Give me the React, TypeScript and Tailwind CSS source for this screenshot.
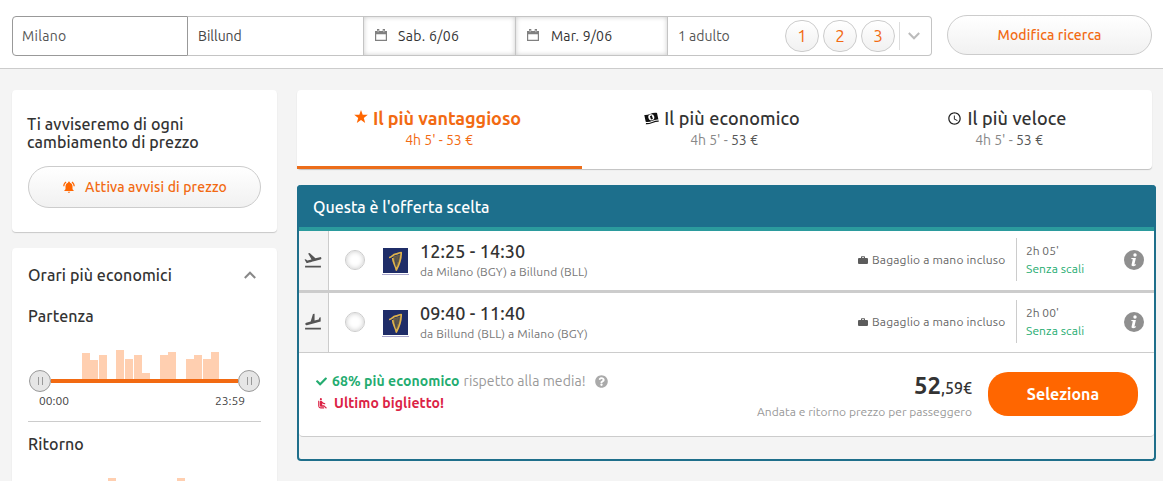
import React from 'react';
import { FaCheck, FaQuestionCircle } from 'react-icons/fa';
import { MdAccessTime, MdAirlineSeatReclineNormal, MdFlightLand, MdFlightTakeoff, MdNotificationsActive } from 'react-icons/md';

interface Flight {
  times: string;
  route: string;
  duration: string;
  outbound: boolean;
}

const flights: Flight[] = [
  { times: '12:25 - 14:30', route: 'da Milano (BGY) a Billund (BLL)', duration: "2h 05'", outbound: true },
  { times: '09:40 - 11:40', route: 'da Billund (BLL) a Milano (BGY)', duration: "2h 00'", outbound: false },
];

// One entry per time slot, value is the bar height in px
const departureBars = [0, 0, 0, 0, 26, 19, 24, 0, 29, 20, 24, 6, 0, 24, 27, 0, 20, 24, 20, 27, 0, 0, 0];
const returnBars = [0, 0, 0, 0, 0, 0, 0, 29, 0, 0, 0, 0, 0, 0, 0, 29, 0, 0, 0, 0, 0, 0, 0];

function CalendarIcon() {
  return (
    <svg className="mb-0.5 h-3 w-3" viewBox="0 0 12 12" fill="none">
      <path d="M.6 2.5h10.800v8.900H.6z" stroke="#808080" strokeWidth="1.200" />
      <path d="M0 2h12v3.300H0zM2 0h2.300v3H2zM7.700 0H10v3H7.700z" fill="#808080" />
      <path d="M3.100 1v2.200M8.900 1v2.200" stroke="#fff" strokeWidth=".6" />
    </svg>
  );
}

function StarIcon() {
  return (
    <svg className="mb-[3px] h-[13px] w-[14px]" viewBox="0 0 14 13">
      <path d="M7 0l1.700 4.700 5.100.1-4 3.100L11.200 13 7 10 2.800 13l1.400-5.100-4-3.100 5.100-.1z" fill="#ff6600" />
    </svg>
  );
}

function BanknotesIcon() {
  return (
    <svg className="h-[13px] w-[15px]" viewBox="0 0 15 13">
      <path d="M.3 3C4 3.800 8 0 13 .9l1.400 6.700C10.500 6.800 6 11 1.700 9.800z" fill="#111" />
      <ellipse cx="7.300" cy="5.300" rx="3" ry="3.100" fill="#fff" transform="rotate(-14 7.300 5.300)" />
      <path d="M5.900 4.200l1.900-.9 1.100 3.700-1.900.5z" fill="#111" />
      <path d="M1.900 11.600c4.300.9 8-3 12.800-2.500" stroke="#111" strokeWidth="1.200" fill="none" />
    </svg>
  );
}

function SuitcaseIcon() {
  return (
    <svg className="h-2 w-[10px] shrink-0" viewBox="0 0 10 8">
      <path d="M3 2V.9C3 .5 3.300.2 3.700.2h2.600c.4 0 .7.3.7.7V2h2.100c.5 0 .9.4.9.9v4.200c0 .5-.4.9-.9.9H.9C.4 8 0 7.600 0 7.100V2.900C0 2.400.4 2 .9 2zm1 0h2v-.8H4z" fill="#5c5c5c" />
    </svg>
  );
}

function HarpLogo() {
  return (
    <svg className="h-[27px] w-[27px]" viewBox="0 0 27 27">
      <path d="M1 0h25v25H1z" fill="#1f2d68" />
      <path d="M0 26.500h27" stroke="#aaa6cc" />
      <path d="M11 8.500l7.500-2-.500 6.500-3.800 8.500-2.700-7z" fill="#77683f" />
      <path d="M7 9.500c3 .3 3.500-3 6.500-3.300 2.600-.2 3.300-1.700 5.700-1.700-.2 4.500.3 8-4.900 17.500-1-5.500-3.400-6.500-3.600-12" fill="none" stroke="#deb24b" strokeWidth="1.700" strokeLinejoin="round" />
      <path d="M13 8.500l1 10M15 8l-.400 8.500M17 7.500l-1.300 6.500" stroke="#1f2d68" strokeWidth=".5" />
    </svg>
  );
}

function InfoIcon() {
  return (
    <svg className="h-5 w-5" viewBox="0 0 20 20">
      <circle cx="10" cy="10" r="10" fill="#8f8f8f" />
      <circle cx="11" cy="5" r="1.700" fill="#fff" />
      <path d="M7.500 8h4.400l-1.500 6.500 1.700-.3-.3 1C10 16.500 7 16.600 7.600 14.500L8.800 9.200l-1.600-.1z" fill="#fff" />
    </svg>
  );
}

function Chevron({ up = false, className }: { up?: boolean; className: string }) {
  return (
    <svg className={className} viewBox="0 0 12 8" fill="none">
      <path d={up ? 'M.8 7L6 1.700 11.200 7' : 'M.8 1L6 6.300 11.200 1'} stroke="currentColor" strokeWidth="2" />
    </svg>
  );
}

function SearchBar() {
  return (
    <header className="flex h-[69px] items-start border-b border-[#ccc] bg-white pl-3">
      <div className="mt-4 flex h-10 w-[920px] text-[14px] text-[#555]">
        <div className="flex w-44 items-center rounded-l-[4px] border border-[#999] pl-[9px] tracking-[0.3px]">Milano</div>
        <div className="flex w-44 items-center border-y border-[#c4c4c4] pl-[10px] text-[#444]">Billund</div>
        <div className="-ml-px flex w-[153px] items-center gap-[11px] border border-[#c4c4c4] pl-[11px] text-[#333] shadow-[inset_0_0_5px_#ccc]">
          <CalendarIcon />
          <span className="tracking-[0.35px]">Sab. 6/06</span>
        </div>
        <div className="flex w-[152px] items-center gap-[12px] border border-l-0 border-[#c4c4c4] pl-[11px] text-[#333] shadow-[inset_0_0_5px_#ccc]">
          <CalendarIcon />
          <span className="tracking-[0.2px]">Mar. 9/06</span>
        </div>
        <div className="flex w-[264px] items-center rounded-r-[4px] border border-l-0 border-[#c4c4c4] pl-[10px]">
          <span className="w-[107px]">1 adulto</span>
          <div className="flex gap-1">
            {[1, 2, 3].map((n) => (
              <span key={n} className="flex h-8 w-[34px] items-center justify-center rounded-full border border-[#ccc] bg-linear-to-b from-white to-[#f1f1f1] text-[17px] text-[#f26a12]">
                {n}
              </span>
            ))}
          </div>
          <span className="ml-1 h-7 w-px bg-[#ddd]" />
          <Chevron className="ml-2 h-2 w-3 text-[#bbb]" />
        </div>
      </div>
      <button className="mt-[15px] ml-[15px] h-10 w-[205px] rounded-full border border-[#ccc] bg-linear-to-b from-white to-[#f1f1f1] text-[14px] font-medium tracking-[0.13px] text-[#f26a12]">
        Modifica ricerca
      </button>
    </header>
  );
}

function SliderHandle() {
  return (
    <span className="flex h-[22px] w-[22px] items-center justify-center gap-[3px] rounded-full border border-[#999] bg-[#e6e6e6]">
      <span className="h-2 w-px bg-[#999]" />
      <span className="h-2 w-px bg-[#999]" />
    </span>
  );
}

function PriceBars({ title, bars }: { title: string; bars: number[] }) {
  return (
    <>
      <h3 className="text-[16px] leading-5 font-medium tracking-[0.1px] text-[#333]">{title}</h3>
      <div className="mt-[23px] ml-[19px] flex h-[30px] items-end gap-[0.66px]">
        {bars.map((height, i) => (
          <span key={i} className="w-2 bg-[#ffcfb0]" style={{ height }} />
        ))}
      </div>
    </>
  );
}

function RangeSlider({ from, to }: { from: string; to: string }) {
  return (
    <>
      <div className="-mt-[9px] flex h-[22px] items-center">
        <span className="ml-px"><SliderHandle /></span>
        <span className="h-1 flex-1 bg-[#f26a12]" />
        <span className="mr-px"><SliderHandle /></span>
      </div>
      <div className="flex justify-between pr-4 pl-[11px] text-[12px] leading-[18px] text-[#444]">
        <span>{from}</span>
        <span>{to}</span>
      </div>
    </>
  );
}

function Sidebar() {
  return (
    <aside className="flex w-[265px] shrink-0 flex-col gap-4">
      <div className="h-[142px] rounded-[4px] bg-white px-4 pt-[25px] shadow-[0_1px_1px_#c8c8c8]">
        <h2 className="-ml-px text-[16px] leading-[18px] font-medium tracking-[0.1px] text-[#333]">
          Ti avviseremo di ogni<br />cambiamento di prezzo
        </h2>
        <button className="mt-[15px] flex h-[42px] w-[233px] items-center justify-center gap-[9px] rounded-full border border-[#ccc] bg-linear-to-b from-white to-[#f1f1f1] text-[14px] font-medium tracking-[0.13px] text-[#f26a12]">
          <MdNotificationsActive className="h-[14px] w-[14px] text-[#ff6600]" />
          Attiva avvisi di prezzo
        </button>
      </div>
      <div className="h-[300px] rounded-t-[4px] bg-white px-4 pt-[17px] shadow-[0_1px_1px_#c8c8c8]">
        <div className="flex h-5 items-center justify-between pr-[5px] text-[16px] font-medium tracking-[0.1px] text-[#333]">
          Orari più economici
          <Chevron up className="h-2 w-3 text-[#888]" />
        </div>
        <div className="mt-[21px] border-b border-[#ccc] pb-[11px]">
          <PriceBars title="Partenza" bars={departureBars} />
          <RangeSlider from="00:00" to="23:59" />
        </div>
        <div className="mt-3">
          <PriceBars title="Ritorno" bars={returnBars} />
        </div>
      </div>
    </aside>
  );
}

function SortTabs() {
  return (
    <nav className="flex h-[79px] w-[855px] rounded-[4px] bg-white text-center shadow-[0_1px_1px_#c0c0c0]">
      <div className="w-[285px] border-b-3 border-[#ec6d1a] pt-[17px] text-[#f26a12]">
        <div className="flex h-[22px] items-center justify-center gap-[5px] pr-1 text-[18px] font-bold tracking-[-0.05px]">
          <StarIcon />
          Il più vantaggioso
        </div>
        <div className="mt-px pr-px text-[14px] leading-5">4h 5' - 53 €</div>
      </div>
      <div className="w-[285px] pt-[17px]">
        <div className="flex h-[22px] items-center justify-center gap-[5px] pr-[5px] text-[18px] font-medium tracking-[0.13px] text-[#333]">
          <BanknotesIcon />
          Il più economico
        </div>
        <div className="mt-px pr-px text-[14px] leading-5 text-[#888]">4h 5' - <span className="text-[#555]">53 €</span></div>
      </div>
      <div className="w-[285px] pt-[17px]">
        <div className="flex h-[22px] items-center justify-center gap-[5px] pr-[5px] text-[18px] font-medium tracking-[0.13px] text-[#333]">
          <MdAccessTime className="h-[15px] w-[15px] text-[#222]" />
          Il più veloce
        </div>
        <div className="mt-px pr-px text-[14px] leading-5 text-[#888]">4h 5' - <span className="text-[#555]">53 €</span></div>
      </div>
    </nav>
  );
}

function FlightRow({ flight }: { flight: Flight }) {
  return (
    <div className="flex h-[59px] items-center pb-0.5">
      <div className="-mb-0.5 flex w-[30px] items-center justify-center self-stretch border-r border-[#ccc] bg-[#f4f4f4] pr-px pb-0.5 text-[#555]">
        {flight.outbound ? <MdFlightTakeoff className="h-5 w-5" /> : <MdFlightLand className="h-5 w-5 -scale-x-100" />}
      </div>
      <span className="ml-4 h-5 w-5 rounded-full border border-[#ccc] bg-white shadow-[inset_0_0_5px_#ccc]" />
      <div className="mt-[3px] ml-[17px]"><HarpLogo /></div>
      <div className="mt-0.5 ml-[11px] flex-1">
        <div className="text-[18px] leading-[22px] font-medium tracking-[0.1px] text-[#333]">{flight.times}</div>
        <div className="text-[12px] leading-[19px] tracking-[0.1px] text-[#777]">{flight.route}</div>
      </div>
      <div className="flex w-[148px] items-center gap-1 text-[12px] text-[#666]">
        <SuitcaseIcon />
        <span className="tracking-[0.18px] whitespace-nowrap">Bagaglio a mano incluso</span>
      </div>
      <div className="ml-[10px] flex h-[43px] w-[108px] flex-col justify-center border-l border-[#ccc] pl-[9px] text-[12px] leading-[18px] text-[#666]">
        <span>{flight.duration}</span>
        <span className="tracking-[0.1px] text-[#24ac70]">Senza scali</span>
      </div>
      <div className="mr-[10px]"><InfoIcon /></div>
    </div>
  );
}

function OfferCard() {
  return (
    <section className="mt-4 h-[276px] w-[859px] rounded-[4px] border-2 border-t-0 border-[#1f6f8b] bg-[#f4f4f4]">
      <div className="-mx-0.5 flex h-[42px] items-center rounded-t-[4px] bg-[#1d6f8c] pt-0.5 pl-4 text-[16px] font-medium text-white">
        Questa è l'offerta scelta
      </div>
      <div className="h-1 bg-[#2b9b9d]" />
      <div className="h-[206px] rounded-b-[4px] border-b border-[#ccc] bg-white">
        <FlightRow flight={flights[0]} />
        <div className="h-[3px] bg-[#ccc]" />
        <FlightRow flight={flights[1]} />
        <div className="flex h-[84px] justify-between border-t border-[#ccc] pr-4 pl-[17px]">
          <div className="pt-[17px] text-[14px] leading-[22px] tracking-[0.08px]">
            <div className="flex items-center text-[#999]">
              <FaCheck className="mr-[5px] h-[11px] w-[11px] text-[#24ac70]" />
              <b className="mr-1 text-[#24ac70]">68% più economico</b>
              rispetto alla media!
              <FaQuestionCircle className="ml-[9px] h-[13px] w-[13px] text-[#aaa]" />
            </div>
            <div className="flex items-center text-[#db2346]">
              <MdAirlineSeatReclineNormal className="mr-[5px] h-[13px] w-[13px]" />
              <b>Ultimo biglietto!</b>
            </div>
          </div>
          <div className="flex pt-[19px]">
            <div className="mr-4 text-right">
              <div className="text-[24px] leading-[27px] font-semibold text-[#333]">
                52<span className="text-[16px] font-medium">,59€</span>
              </div>
              <div className="text-[12px] leading-[20px] tracking-[0.05px] text-[#999]">Andata e ritorno prezzo per passeggero</div>
            </div>
            <button className="h-11 w-[150px] rounded-[20px] bg-[#ff6600] text-[16px] font-semibold text-white">Seleziona</button>
          </div>
        </div>
      </div>
    </section>
  );
}

export default function App() {
  return (
    <div className="h-[481px] w-[1163px] overflow-hidden bg-[#f4f4f4] font-['Ubuntu','Noto_Sans',sans-serif]">
      <SearchBar />
      <main className="mt-[21px] flex gap-5 pl-3">
        <Sidebar />
        <div>
          <SortTabs />
          <OfferCard />
        </div>
      </main>
    </div>
  );
}
